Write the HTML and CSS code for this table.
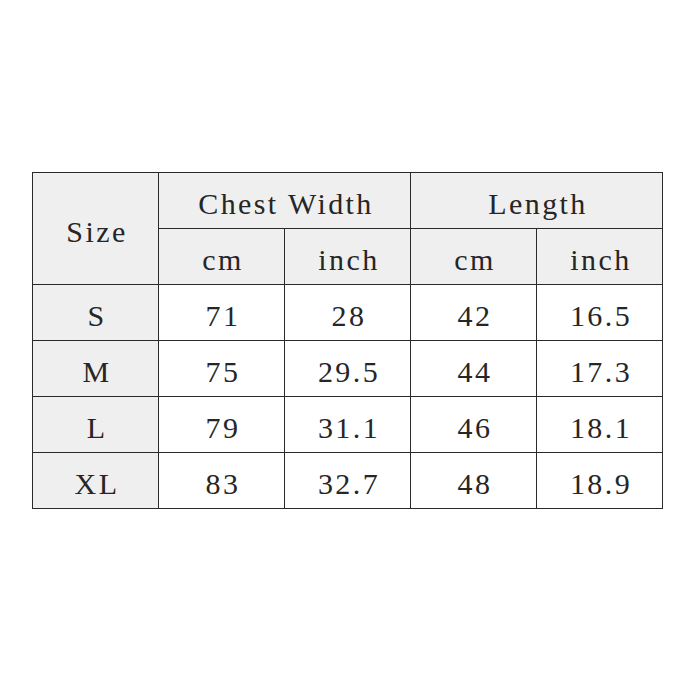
FILE: index.html
```html
<!DOCTYPE html>
<html>
<head>
<meta charset="utf-8">
<link rel="stylesheet" href="styles.css">
</head>
<body>
<div class="page">
  <table class="size-table">
    <tr>
      <th class="head" rowspan="2">Size</th>
      <th class="head" colspan="2">Chest Width</th>
      <th class="head" colspan="2">Length</th>
    </tr>
    <tr>
      <th class="head">cm</th>
      <th class="head">inch</th>
      <th class="head">cm</th>
      <th class="head">inch</th>
    </tr>
    <tr><td class="head">S</td><td>71</td><td>28</td><td>42</td><td>16.5</td></tr>
    <tr><td class="head">M</td><td>75</td><td>29.5</td><td>44</td><td>17.3</td></tr>
    <tr><td class="head">L</td><td>79</td><td>31.1</td><td>46</td><td>18.1</td></tr>
    <tr><td class="head">XL</td><td>83</td><td>32.7</td><td>48</td><td>18.9</td></tr>
  </table>
</div>
</body>
</html>
```
FILE: styles.css
```css
html, body {
  margin: 0;
  padding: 0;
  background: #ffffff;
}
.page {
  width: 700px;
  height: 700px;
  padding: 172px 0 0 32px;
  box-sizing: border-box;
}
.size-table {
  border-collapse: collapse;
  table-layout: fixed;
  font-family: "Liberation Serif", serif;
  font-size: 30px;
  font-weight: normal;
  letter-spacing: 2.4px;
  color: #262626;
}
.size-table th,
.size-table td {
  width: 126px;
  height: 56px;
  padding: 6px 0 0 3px;
  box-sizing: border-box;
  border: 1px solid #2a2a2a;
  text-align: center;
  vertical-align: middle;
  font-weight: normal;
  line-height: 1;
  background: #ffffff;
}
.size-table .head {
  background: #efefef;
}
```
